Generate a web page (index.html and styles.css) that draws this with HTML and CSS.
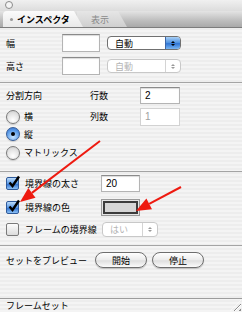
FILE: index.html
```html
<!DOCTYPE html>
<html lang="ja">
 <head>
  <title>インスペクタ</title>
  <meta charset="UTF-8">
  <link rel="stylesheet" href="styles.css">
 </head>
 <body>

 <div class="panel">
  <div class="titlebar"><span class="dot"></span></div>

  <div class="tabbar">
   <div class="tab tab-active"><span class="tab-mark"></span>インスペクタ</div>
   <div class="tab tab-back">表示</div>
  </div>

  <!-- サイズ -->
  <div class="group size">
   <div class="row">
    <span class="label">幅</span>
    <span class="field"></span>
    <span class="popup"><span class="popup-text">自動</span><span class="stepper blue"><i class="up"></i><i class="down"></i></span></span>
   </div>
   <div class="row">
    <span class="label">高さ</span>
    <span class="field"></span>
    <span class="popup off"><span class="popup-text">自動</span><span class="stepper"><i class="up"></i><i class="down"></i></span></span>
   </div>
  </div>

  <!-- 分割 -->
  <div class="group split">
   <span class="label">分割方向</span>
   <span class="label">行数</span>
   <span class="field num">2</span>

   <span class="choice"><span class="radio"></span>横</span>
   <span class="label">列数</span>
   <span class="field num off">1</span>

   <span class="choice"><span class="radio on"></span>縦</span>
   <span></span><span></span>

   <span class="choice"><span class="radio"></span>マトリックス</span>
  </div>

  <!-- 境界線 -->
  <div class="group border">
   <div class="row row-1">
    <span class="choice"><span class="check on"><svg viewBox="0 0 13 13"><path d="M2.5 6.5 L5.5 10 L12 0.5" /></svg></span>境界線の太さ</span>
    <span class="field num">20</span>
   </div>
   <div class="row row-2">
    <span class="choice"><span class="check on"><svg viewBox="0 0 13 13"><path d="M2.5 6.5 L5.5 10 L12 0.5" /></svg></span>境界線の色</span>
    <span class="well"><span class="well-color"></span></span>
   </div>
   <div class="row row-3">
    <span class="choice"><span class="check"></span>フレームの境界線</span>
    <span class="popup off small"><span class="popup-text">はい</span><span class="stepper"><i class="up"></i><i class="down"></i></span></span>
   </div>
  </div>

  <!-- プレビュー -->
  <div class="group preview">
   <div class="row">
    <span class="label">セットをプレビュー</span>
    <span class="button">開始</span>
    <span class="button">停止</span>
   </div>
  </div>

  <div class="statusbar">フレームセット<span class="resize"></span></div>

  <svg class="arrows" viewBox="0 0 242 312">
   <line x1="100" y1="141" x2="31.9" y2="192.9" />
   <polygon points="20,202 35.5,197.7 28.3,188.1" />
   <line x1="181" y1="187" x2="149.2" y2="203.9" />
   <polygon points="136,211 152,209.2 146.4,198.6" />
  </svg>
 </div>

</body>
</html>
```

FILE: styles.css
```css
body { margin: 0; background: #ececec; }
.panel { position: relative; width: 242px; height: 312px; overflow: hidden; display: flex; flex-direction: column;
  font-family: "Noto Sans CJK JP", "Liberation Sans", sans-serif; font-size: 9px; color: #000;
  background: repeating-linear-gradient(to bottom, #ededed 0 2px, #f4f4f4 2px 4px); }

.titlebar { height: 11px; background: linear-gradient(#f0f0f0, #dcdcdc); position: relative; }
.titlebar .dot { position: absolute; left: 5px; top: 1px; width: 6px; height: 6px; border: 1px solid #8a8a8a; border-radius: 50%; background: #f4f4f4; }

.tabbar { height: 16px; display: flex; align-items: stretch; border-bottom: 1px solid #7c7c7c; padding-left: 3px;
  background: linear-gradient(#e4e4e4, #bdbdbd 60%, #a9a9a9); }
.tab { display: flex; align-items: center; clip-path: polygon(0 0, calc(100% - 9px) 0, 100% 100%, 0 100%); }
.tab-active { width: 80px; padding-left: 7px; box-sizing: border-box; font-weight: bold; border-radius: 4px 0 0 0;
  background: linear-gradient(#fbfbfb, #e9e9e9); position: relative; z-index: 1; }
.tab-mark { width: 3px; height: 3px; background: #9a9a9a; border-radius: 50%; margin-right: 4px; }
.tab-back { width: 50px; margin-left: -6px; padding-left: 14px; box-sizing: border-box; color: #8a8a8a;
  background: linear-gradient(#e6e6e6, #cfcfcf); }

.group { border-bottom: 1px solid #a4a4a4; padding-left: 6px; }
.row { display: flex; align-items: center; }
.label { white-space: nowrap; }

.field { box-sizing: border-box; background: #fff; border: 1px solid #b4b4b4; border-top-color: #8a8a8a;
  box-shadow: inset 0 1px 1px rgba(0,0,0,.15); display: flex; align-items: center; padding-left: 4px;
  font-family: "Liberation Sans", sans-serif; font-size: 10px; }
.field.off { color: #a0a0a0; border-color: #d2d2d2; box-shadow: none; }

.size { padding-top: 6px; padding-bottom: 7px; }
.size .row { height: 18px; }
.size .row + .row { margin-top: 5px; }
.size .label { width: 56px; }
.size .field { width: 38px; height: 18px; }

.popup { box-sizing: border-box; display: flex; height: 14px; border: 1px solid #707070; border-radius: 4px; background: #fff; overflow: hidden; }
.size .popup { width: 74px; margin-left: 7px; }
.popup-text { flex: 1; padding-left: 7px; display: flex; align-items: center; }
.stepper { width: 14px; display: flex; flex-direction: column; align-items: center; justify-content: center; gap: 1px; border-left: 1px solid #b0b0b0; }
.stepper.blue { background: linear-gradient(#a9d0f6, #4b8fe0 50%, #2f74d4 55%, #7ab6f3); border-left-color: #3a66a8; }
.stepper i { width: 0; height: 0; border-left: 2px solid transparent; border-right: 2px solid transparent; }
.stepper .up { border-bottom: 2px solid #000; }
.stepper .down { border-top: 2px solid #000; }
.popup.off { border-color: #c8c8c8; color: #b4b4b4; }
.popup.off .stepper { border-left-color: #d4d4d4; }
.popup.off .up { border-bottom-color: #9a9a9a; }
.popup.off .down { border-top-color: #9a9a9a; }

.split { display: grid; grid-template-columns: 84px 50px 40px; grid-template-rows: 21px 17px 18px 19px;
  align-items: center; padding-top: 4px; padding-bottom: 9px; }
.split > :nth-child(-n+3) { align-self: start; height: 17px; display: flex; align-items: center; }
.split .field { height: 17px; }
.split .field.off { height: 18px; }

.choice { display: flex; align-items: center; white-space: nowrap; }
.radio { box-sizing: border-box; width: 14px; height: 14px; border-radius: 50%; margin-right: 4px;
  border: 1px solid #7a7a7a; background: radial-gradient(circle at 50% 75%, #fff, #e2e2e2 60%, #c8c8c8);
  box-shadow: 0 1px 1px rgba(0,0,0,.15); display: flex; align-items: center; justify-content: center; }
.radio.on { border-color: #375c96; background: radial-gradient(circle at 50% 75%, #c7e4ff, #5c9ce8 60%, #2d6ac9); }
.radio.on::after { content: ""; width: 4px; height: 4px; border-radius: 50%; background: #000; }

.border { padding-top: 3px; padding-bottom: 8px; }
.border .choice { width: 95px; }
.border .row-1 { height: 17px; }
.border .row-2 { height: 17px; margin-top: 7px; }
.border .row-3 { height: 15px; margin-top: 6px; }
.border .field { width: 39px; height: 17px; }
.check { box-sizing: border-box; width: 13px; height: 13px; margin-right: 6px; border-radius: 2px;
  border: 1px solid #7a7a7a; background: linear-gradient(#fdfdfd, #dcdcdc); position: relative; }
.check.on { border-color: #2f5a9a; background: linear-gradient(#bcdcfb, #5a99e6 50%, #2f70d0 55%, #8cc2f6); }
.check svg { position: absolute; left: 0; top: -2px; width: 13px; height: 13px; overflow: visible; }
.check path { fill: none; stroke: #000; stroke-width: 2.4; stroke-linejoin: miter; }
.well { box-sizing: border-box; width: 39px; height: 17px; border: 1px solid #9a9a9a; background: #e6e6e6; padding: 1px; }
.well-color { display: block; height: 100%; box-sizing: border-box; border: 2px solid #3c3c3c; background: #d6d6d6; }
.popup.small { width: 56px; height: 15px; margin-left: 1px; }

.preview { flex: 1; padding-top: 6px; border-bottom: none; }
.preview .row { height: 16px; }
.preview .label { width: 89px; }
.button { box-sizing: border-box; width: 52px; height: 16px; border: 1px solid #6e6e6e; border-radius: 8px;
  background: linear-gradient(#fff, #ececec 50%, #dedede 55%, #fbfbfb); display: flex; align-items: center; justify-content: center;
  box-shadow: 0 1px 1px rgba(0,0,0,.2); }
.button + .button { margin-left: 5px; }

.statusbar { height: 13px; border-top: 1px solid #9c9c9c; padding-left: 6px; display: flex; align-items: center; position: relative; }
.resize { position: absolute; right: 1px; bottom: 1px; width: 11px; height: 11px;
  background: repeating-linear-gradient(135deg, transparent 0 2px, #8c8c8c 2px 3px, #fff 3px 4px); clip-path: polygon(100% 0, 100% 100%, 0 100%); }

.arrows { position: absolute; left: 0; top: 0; width: 242px; height: 312px; pointer-events: none; }
.arrows line { stroke: #ee1a10; stroke-width: 2; }
.arrows polygon { fill: #ee1a10; }
```
